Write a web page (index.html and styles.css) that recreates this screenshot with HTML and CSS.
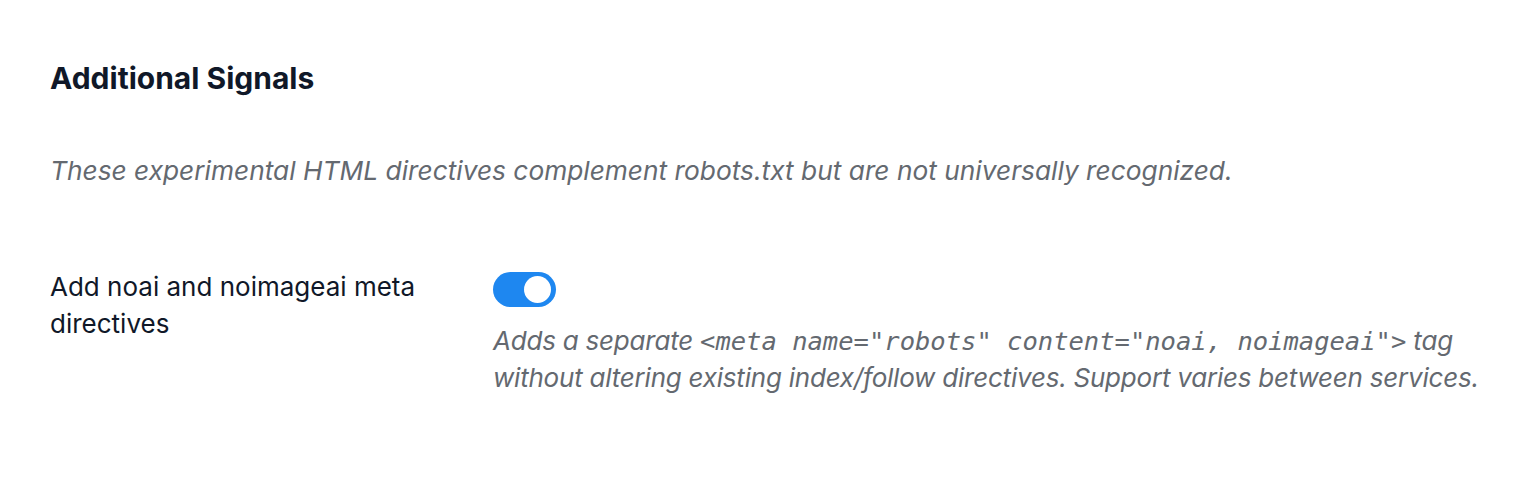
FILE: index.html
```html
<!DOCTYPE html>
<html lang="en">
<head>
    <meta charset="UTF-8">
    <meta name="viewport" content="width=device-width, initial-scale=1.0">
    <title>Additional Signals</title>
    <link rel="stylesheet" href="styles.css">
</head>
<body>
    <div class="wrap">
        <h2 class="section-title">Additional Signals</h2>
        <p class="section-note">These experimental HTML directives complement robots.txt but are not universally recognized.</p>

        <div class="field-row">
            <div class="field-label">Add noai and noimageai meta directives</div>
            <div class="field-control">
                <label class="toggle">
                    <input type="checkbox" checked>
                    <span class="slider"></span>
                </label>
                <p class="field-help">Adds a separate <code>&lt;meta name="robots" content="noai, noimageai"&gt;</code> tag without altering existing index/follow directives. Support varies between services.</p>
            </div>
        </div>
    </div>
</body>
</html>
```

FILE: styles.css
```css
* {
    box-sizing: border-box;
    margin: 0;
    padding: 0;
}

body {
    background-color: #ffffff;
    font-family: Inter, "Noto Sans", sans-serif;
    color: #1d2327;
}

.wrap {
    padding: 60px 28px 0 50px;
}

.section-title {
    font-size: 30px;
    font-weight: 700;
    color: #101828;
    line-height: 36px;
}

.section-note {
    margin-top: 57px;
    font-size: 26.3px;
    font-style: italic;
    color: #646970;
    line-height: 36px;
}

.field-row {
    display: flex;
    margin-top: 79px;
}

.field-label {
    width: 443px;
    padding-right: 40px;
    font-size: 26px;
    line-height: 37px;
    color: #101828;
}

.field-control {
    flex: 1;
    padding-top: 4px;
}

/* switch */
.toggle {
    display: inline-block;
    position: relative;
    width: 63px;
    height: 35px;
}

.toggle input {
    display: none;
}

.slider {
    position: absolute;
    inset: 0;
    background-color: #1e87f0;
    border-radius: 18px;
    cursor: pointer;
}

.slider::after {
    content: "";
    position: absolute;
    top: 4px;
    right: 5px;
    width: 27px;
    height: 27px;
    border-radius: 50%;
    background-color: #ffffff;
}

.field-help {
    margin-top: 11px;
    font-size: 26px;
    font-style: italic;
    letter-spacing: -0.22px;
    color: #646970;
    line-height: 37px;
}

.field-help code {
    font-family: "DejaVu Sans Mono", monospace;
    font-size: 25.5px;
    font-style: italic;
    letter-spacing: 0;
    line-height: 1;
}
```
